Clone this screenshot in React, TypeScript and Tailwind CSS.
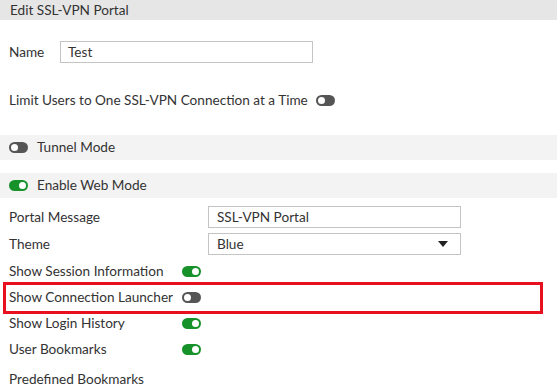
import React from "react";

function Toggle({ on }: { on: boolean }) {
  return (
    <span
      className={`relative inline-block h-[11px] w-[19px] rounded-full ${on ? "bg-[#17922b]" : "bg-[#555555]"}`}
      aria-hidden="true"
    >
      <span
        className={`absolute top-[2px] h-[7px] w-[7px] rounded-full bg-white ${on ? "right-[2px]" : "left-[2px]"}`}
      />
    </span>
  );
}

function FieldRow({ label, on, boxed }: { label: string; on: boolean; boxed?: boolean }) {
  return (
    <div className="relative flex h-[26px] items-center pl-[9px]">
      {boxed && (
        <div className="pointer-events-none absolute left-[3px] top-[-2px] h-[32px] w-[540px] border-[3px] border-[#e8101e]" />
      )}
      <span className="w-[173px]">{label}</span>
      <Toggle on={on} />
    </div>
  );
}

export default function App() {
  return (
    <div className="h-[390px] w-[557px] overflow-hidden bg-white text-[13.6px] text-[#333333] [font-family:Lato,'Liberation_Sans',sans-serif]">
      <div className="flex h-[20px] items-center bg-[#e6e6e6] pl-[10px]">Edit SSL-VPN Portal</div>

      <div className="mt-[21px] flex h-[22px] items-center pl-[9px]">
        <span className="w-[51px]">Name</span>
        <div className="flex h-[22px] w-[253px] items-center border border-[#c4c4c4] pl-[7px]">Test</div>
      </div>

      <div className="mt-[26px] flex h-[22px] items-center gap-[8px] pl-[9px]">
        <span>Limit Users to One SSL-VPN Connection at a Time</span>
        <Toggle on={false} />
      </div>

      <div className="mt-[24px] flex h-[25px] items-center gap-[9px] bg-[#f3f3f3] pl-[9px]">
        <Toggle on={false} />
        <span>Tunnel Mode</span>
      </div>

      <div className="mt-[13px] flex h-[25px] items-center gap-[9px] bg-[#f3f3f3] pl-[9px]">
        <Toggle on={true} />
        <span>Enable Web Mode</span>
      </div>

      <div className="mt-[8px] flex h-[22px] items-center pl-[9px]">
        <span className="w-[199px]">Portal Message</span>
        <div className="flex h-[22px] w-[253px] items-center border border-[#c4c4c4] pl-[8px]">SSL-VPN Portal</div>
      </div>

      <div className="mt-[5px] flex h-[22px] items-center pl-[9px]">
        <span className="w-[199px]">Theme</span>
        <div className="flex h-[22px] w-[253px] items-center justify-between border border-[#c4c4c4] pl-[8px] pr-[12px]">
          <span>Blue</span>
          <svg width="10" height="6" viewBox="0 0 10 6" aria-hidden="true">
            <path d="M0 0 L10 0 L5 6 Z" fill="#222222" />
          </svg>
        </div>
      </div>

      <div className="mt-[3px]">
        <FieldRow label="Show Session Information" on={true} />
        <FieldRow label="Show Connection Launcher" on={false} boxed />
        <FieldRow label="Show Login History" on={true} />
        <FieldRow label="User Bookmarks" on={true} />
      </div>

      <div className="mt-[6px] flex h-[22px] items-center pl-[9px]">Predefined Bookmarks</div>
    </div>
  );
}
